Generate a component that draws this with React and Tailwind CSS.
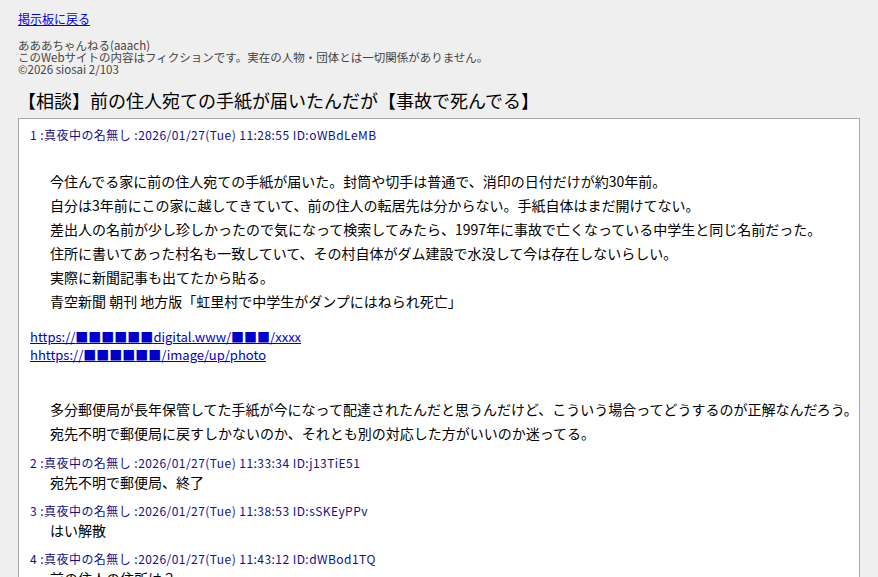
import React from 'react';

const font = { fontFamily: '"Noto Sans CJK JP", "Liberation Sans", sans-serif' };

const Sq = ({ n }) => <span>{'■'.repeat(n)}</span>;

const PostHead = ({ no, date, id, className = '' }) => (
  <div className={`text-[12px] leading-[16px] tracking-[0.45px] text-[#10108a] ${className}`}>
    {no} :真夜中の名無し :{date} ID:{id}
  </div>
);

const replies = [
  { no: 2, date: '2026/01/27(Tue) 11:33:34', id: 'j13TiE51', body: '宛先不明で郵便局、終了' },
  { no: 3, date: '2026/01/27(Tue) 11:38:53', id: 'sSKEyPPv', body: 'はい解散' },
  { no: 4, date: '2026/01/27(Tue) 11:43:12', id: 'dWBod1TQ', body: '前の住人の住所は？' },
];

export default function App() {
  const lines = [
    '今住んでる家に前の住人宛ての手紙が届いた。封筒や切手は普通で、消印の日付だけが約30年前。',
    '自分は3年前にこの家に越してきていて、前の住人の転居先は分からない。手紙自体はまだ開けてない。',
    '差出人の名前が少し珍しかったので気になって検索してみたら、1997年に事故で亡くなっている中学生と同じ名前だった。',
    '住所に書いてあった村名も一致していて、その村自体がダム建設で水没して今は存在しないらしい。',
    '実際に新聞記事も出てたから貼る。',
    '青空新聞 朝刊 地方版「虹里村で中学生がダンプにはねられ死亡」',
  ];

  return (
    <div style={font} className="h-[577px] overflow-hidden bg-[#efefef] px-[18px] text-black">
      <div className="pt-[11px] text-[12px] leading-[16px]">
        <a href="#" className="text-[#0000ee] underline">掲示板に戻る</a>
      </div>

      <div className="mt-[12px] text-[11.5px] leading-[12px] text-[#444]">
        <div>あああちゃんねる(aaach)</div>
        <div>このWebサイトの内容はフィクションです。実在の人物・団体とは一切関係がありません。</div>
        <div>©2026 siosai 2/103</div>
      </div>

      <h1 className="mt-[13px] mb-[6px] text-[18px] leading-[24px] font-normal">
        【相談】前の住人宛ての手紙が届いたんだが【事故で死んでる】
      </h1>

      <div className="bg-white border border-[#a8a8a8] pt-[8px] pl-[11px] pb-4">
        <PostHead no={1} date="2026/01/27(Tue) 11:28:55" id="oWBdLeMB" />

        <div className="mt-[26px] pl-[20px] text-[14px] leading-[24px]">
          {lines.map((l) => (
            <div key={l}>{l}</div>
          ))}
        </div>

        <div className="mt-[15px] text-[13px] leading-[18px] text-[#0000cc]">
          <div>
            <a href="#" className="underline">
              https://<Sq n={6} />digital.www/<Sq n={3} />/xxxx
            </a>
          </div>
          <div>
            <a href="#" className="underline">
              hhttps://<Sq n={6} />/image/up/photo
            </a>
          </div>
        </div>

        <div className="mt-[33px] pl-[20px] text-[14px] leading-[24px]">
          <div>多分郵便局が長年保管してた手紙が今になって配達されたんだと思うんだけど、こういう場合ってどうするのが正解なんだろう。</div>
          <div>宛先不明で郵便局に戻すしかないのか、それとも別の対応した方がいいのか迷ってる。</div>
        </div>

        {replies.map((r) => (
          <div key={r.no} className="mt-[10px]">
            <PostHead no={r.no} date={r.date} id={r.id} />
            <div className="pl-[20px] text-[14px] leading-[22px]">{r.body}</div>
          </div>
        ))}
      </div>
    </div>
  );
}
